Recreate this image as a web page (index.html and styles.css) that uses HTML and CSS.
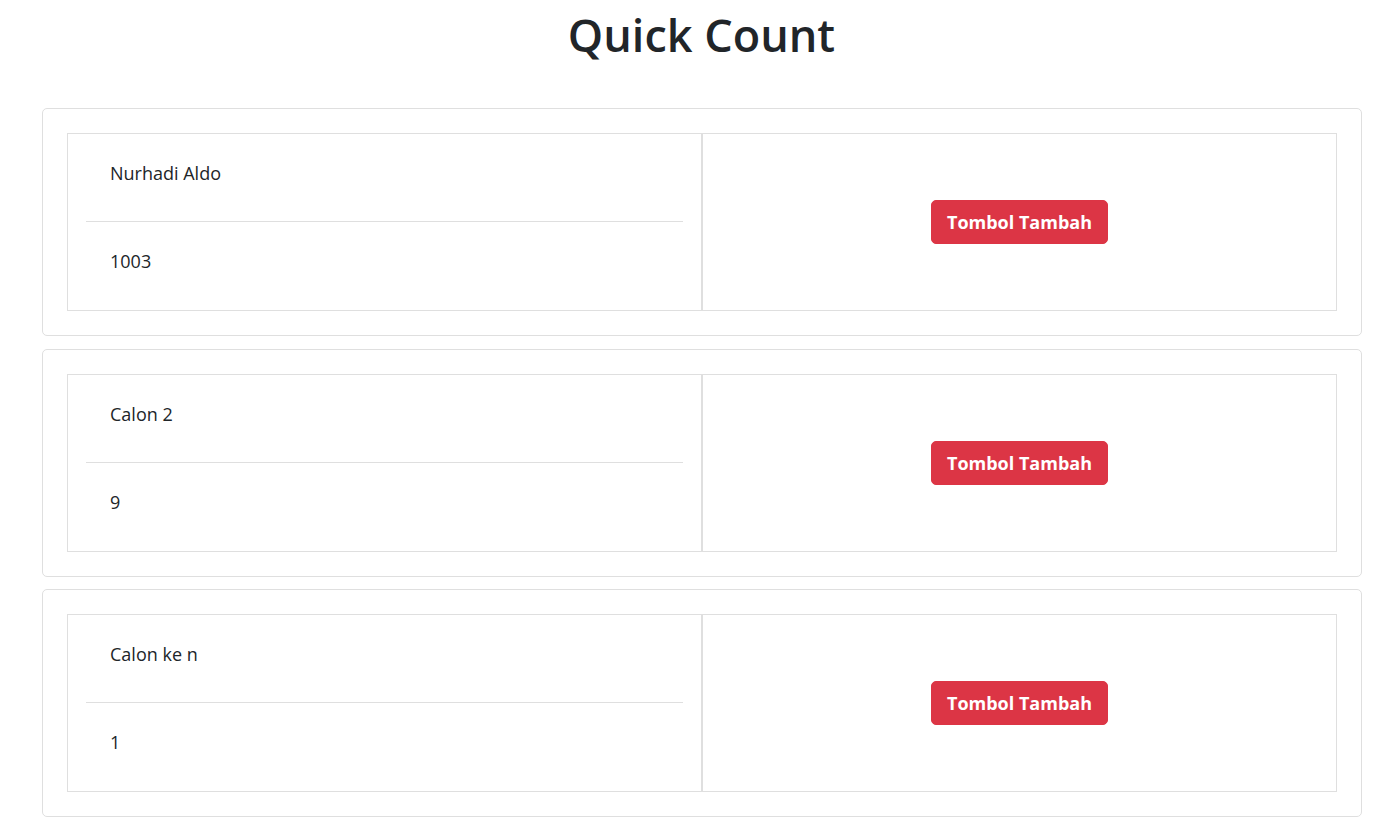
FILE: index.html
```html
<!DOCTYPE html>
<html lang="id">
<head>
<meta charset="utf-8">
<title>Quick Count</title>
<link rel="stylesheet" href="styles.css">
</head>
<body>
<h1 class="title">Quick Count</h1>
<main class="list">
  <section class="card">
    <div class="inner">
      <div class="col col-info">
        <div class="row-text">Nurhadi Aldo</div>
        <hr class="sep">
        <div class="row-text">1003</div>
      </div>
      <div class="col col-action">
        <button class="btn-add" type="button">Tombol Tambah</button>
      </div>
    </div>
  </section>
  <section class="card">
    <div class="inner">
      <div class="col col-info">
        <div class="row-text">Calon 2</div>
        <hr class="sep">
        <div class="row-text">9</div>
      </div>
      <div class="col col-action">
        <button class="btn-add" type="button">Tombol Tambah</button>
      </div>
    </div>
  </section>
  <section class="card">
    <div class="inner">
      <div class="col col-info">
        <div class="row-text">Calon ke n</div>
        <hr class="sep">
        <div class="row-text">1</div>
      </div>
      <div class="col col-action">
        <button class="btn-add" type="button">Tombol Tambah</button>
      </div>
    </div>
  </section>
</main>
</body>
</html>
```

FILE: styles.css
```css
* { box-sizing: border-box; }

html, body {
  margin: 0;
  padding: 0;
  background: #ffffff;
}

body {
  font-family: "Open Sans", "Noto Sans", "Liberation Sans", sans-serif;
  font-size: 16px;
  line-height: 24px;
  color: #212529;
}

.title {
  margin: 7px 0 0;
  height: 101px;
  text-align: center;
  font-size: 45px;
  line-height: 56px;
  font-weight: 600;
  color: #212529;
  padding-left: 3px;
}

.list {
  display: flex;
  flex-direction: column;
  gap: 12.5px;
  padding: 0 38px 0 42px;
}

.card {
  border: 1px solid #dfdfdf;
  border-radius: 5px;
  padding: 24px;
}

.inner {
  display: flex;
  height: 178px;
}

.col {
  flex: 0 0 50%;
  border: 1px solid #dfdfdf;
}

.col-info {
  display: flex;
  flex-direction: column;
  padding: 0 18px;
}

.row-text {
  flex: 0 0 87px;
  padding: 27px 24px 0;
  font-size: 18px;
  line-height: 24px;
}

.row-text:last-child {
  flex: 1 1 auto;
}

.sep {
  margin: 0;
  border: 0;
  border-top: 1px solid #dfdfdf;
}

.col-action {
  display: flex;
  align-items: center;
  justify-content: center;
}

.btn-add {
  font-family: inherit;
  font-size: 18px;
  line-height: 26px;
  font-weight: 700;
  color: #ffffff;
  background: #dc3545;
  border: 1px solid #dc3545;
  border-radius: 5px;
  padding: 8px 15px;
  cursor: pointer;
}
```
